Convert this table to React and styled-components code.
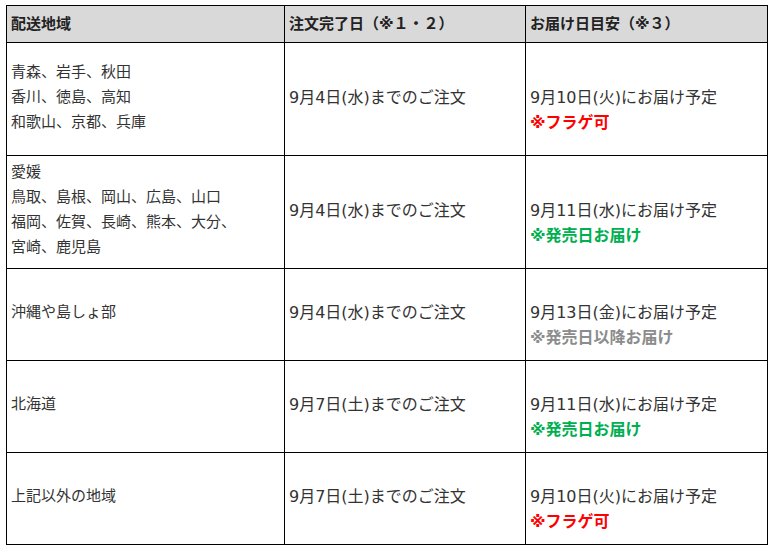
import React from "react";
import styled, { createGlobalStyle } from "styled-components";

const Global = createGlobalStyle`
  html, body { margin: 0; padding: 0; background: #fff; }
  body { font-family: "DejaVu Sans", "Noto Sans CJK JP", sans-serif; }
`;

const Wrap = styled.div`
  padding: 5px 6px 0 6px;
`;

const Table = styled.table`
  border-collapse: collapse;
  table-layout: fixed;
  width: 761px;
  color: #333;
  line-height: 25px;
`;

const HeadCell = styled.th`
  background: #d9d9d9;
  border: 1px solid #000;
  height: 36px;
  padding: 0 4px;
  text-align: left;
  font-weight: bold;
  font-size: 15px;
  color: #222;
  vertical-align: middle;
`;

const Cell = styled.td`
  border: 1px solid #000;
  height: ${(p) => p.$h}px;
  padding: 0 4px 4px 4px;
  vertical-align: middle;
  box-sizing: border-box;
  font-size: ${(p) => (p.$small ? 15 : 16)}px;
`;

const DateBlock = styled.div`
  padding-top: 25px;
`;

const Note = styled.div`
  font-weight: bold;
  color: ${(p) => p.$color};
`;

const colors = { red: "#ff0000", green: "#00b050", gray: "#8c8c8c" };

const rows = [
  {
    h: 113,
    areas: ["青森、岩手、秋田", "香川、徳島、高知", "和歌山、京都、兵庫"],
    order: "9月4日(水)までのご注文",
    date: "9月10日(火)にお届け予定",
    note: "※フラゲ可",
    c: "red",
  },
  {
    h: 113,
    areas: ["愛媛", "鳥取、島根、岡山、広島、山口", "福岡、佐賀、長崎、熊本、大分、", "宮崎、鹿児島"],
    order: "9月4日(水)までのご注文",
    date: "9月11日(水)にお届け予定",
    note: "※発売日お届け",
    c: "green",
  },
  {
    h: 92,
    areas: ["沖縄や島しょ部"],
    order: "9月4日(水)までのご注文",
    date: "9月13日(金)にお届け予定",
    note: "※発売日以降お届け",
    c: "gray",
  },
  {
    h: 92,
    areas: ["北海道"],
    order: "9月7日(土)までのご注文",
    date: "9月11日(水)にお届け予定",
    note: "※発売日お届け",
    c: "green",
  },
  {
    h: 92,
    areas: ["上記以外の地域"],
    order: "9月7日(土)までのご注文",
    date: "9月10日(火)にお届け予定",
    note: "※フラゲ可",
    c: "red",
  },
];

export default function App() {
  return (
    <>
      <Global />
      <Wrap>
        <Table>
          <colgroup>
            <col style={{ width: 278 }} />
            <col style={{ width: 241 }} />
            <col style={{ width: 242 }} />
          </colgroup>
          <thead>
            <tr>
              <HeadCell>配送地域</HeadCell>
              <HeadCell>注文完了日（※１・２）</HeadCell>
              <HeadCell>お届け日目安（※３）</HeadCell>
            </tr>
          </thead>
          <tbody>
            {rows.map((r, i) => (
              <tr key={i}>
                <Cell $h={r.h} $small>
                  {r.areas.map((a, j) => (
                    <div key={j}>{a}</div>
                  ))}
                </Cell>
                <Cell $h={r.h}>{r.order}</Cell>
                <Cell $h={r.h}>
                  <DateBlock>{r.date}</DateBlock>
                  <Note $color={colors[r.c]}>{r.note}</Note>
                </Cell>
              </tr>
            ))}
          </tbody>
        </Table>
      </Wrap>
    </>
  );
}
